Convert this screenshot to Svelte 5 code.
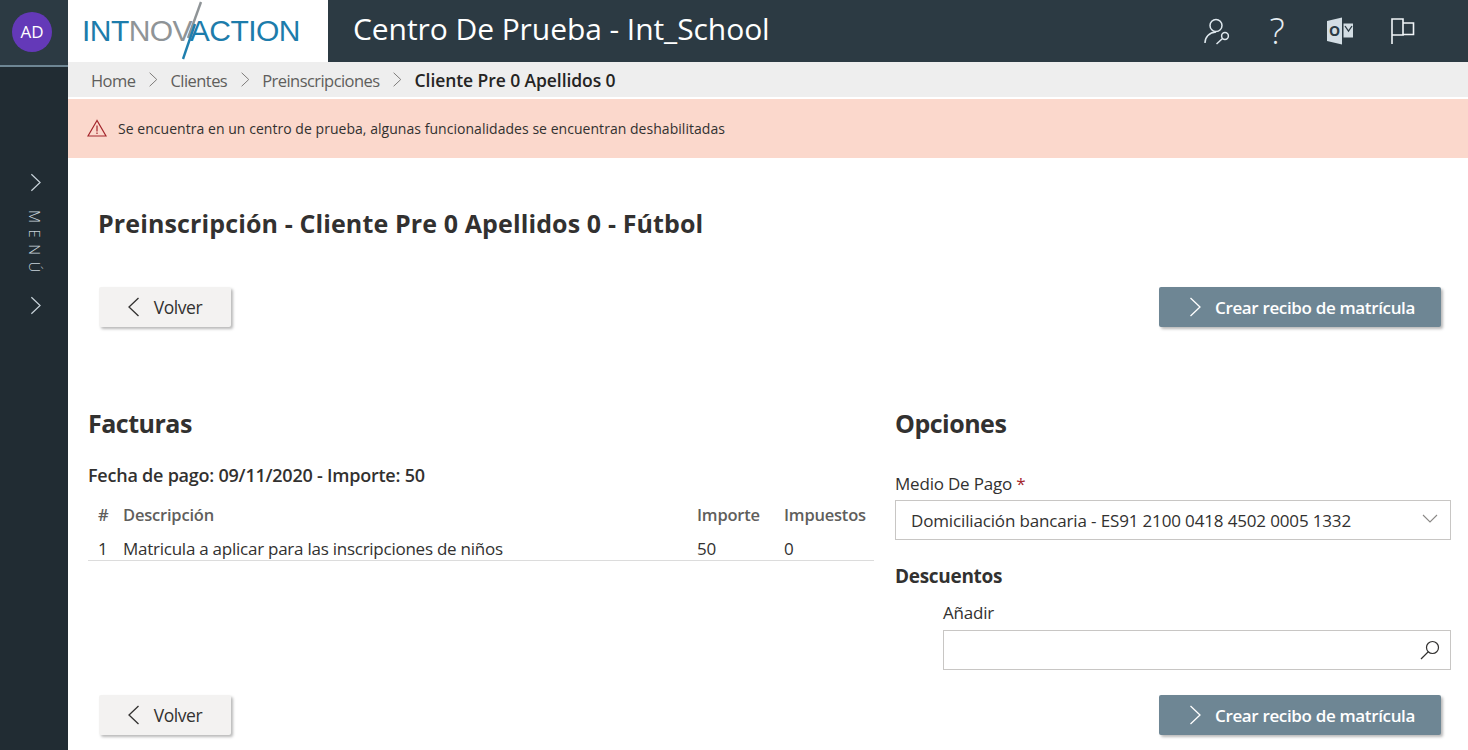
<script>
    const columns = ['#', 'Descripción', 'Importe', 'Impuestos'];
    const rows = [{ n: 1, text: 'Matricula a aplicar para las inscripciones de niños', amount: 50, tax: 0 }];
    const crumbs = ['Home', 'Clientes', 'Preinscripciones'];
</script>

{#snippet chevron(cls)}
    <svg class={cls} viewBox="0 0 12 20" fill="none" stroke="currentColor" stroke-width="1.3"><path d="M1.5 1l9.5 9-9.5 9" /></svg>
{/snippet}
{#snippet chevronLeft()}
    <svg class="btn-icon" viewBox="0 0 12 20" fill="none" stroke="currentColor" stroke-width="1.3"><path d="M10.5 1L1 10l9.5 9" /></svg>
{/snippet}

{#snippet backBtn()}
    <button class="btn">{@render chevronLeft()}<span>Volver</span></button>
{/snippet}
{#snippet createBtn()}
    <button class="btn primary">{@render chevron('btn-icon')}<span>Crear recibo de matrícula</span></button>
{/snippet}

<div class="shell">
    <aside class="side">
        <div class="side-top"><div class="avatar">AD</div></div>
        <div class="side-menu">
            {@render chevron('side-chev')}
            <span class="menu-word">MENÚ</span>
            {@render chevron('side-chev')}
        </div>
    </aside>

    <div class="body">
        <header class="top">
            <div class="logo">
                <span class="logo-text"><b>INT</b><i>NOV</i><b>ACTION</b></span>
                <svg class="logo-slash" viewBox="0 0 70 62" fill="none" stroke-width="2.4">
                    <path d="M63 2L50 38" stroke="#8f9497" />
                    <path d="M57 24L45 59" stroke="#1f7fae" />
                </svg>
            </div>
            <h1>Centro De Prueba - Int_School</h1>
            <div class="top-icons">
                <svg viewBox="0 0 30 30" fill="none" stroke="#dfe8ee" stroke-width="1.5">
                    <circle cx="13" cy="9.5" r="6" />
                    <path d="M2 27c0-6 4-10.5 11-11" />
                    <circle cx="22" cy="20" r="3.4" />
                    <path d="M19.5 22.5L13.5 28" />
                </svg>
                <span class="help">?</span>
                <svg viewBox="0 0 30 30">
                    <path d="M2 5l15-3.500v27L2 25z" fill="#d3dde4" />
                    <path d="M18.500 7.500H28v14h-9.500z" fill="#d3dde4" />
                    <path d="M20 10l3.500 5 3.500-5" fill="none" stroke="#2c3a43" stroke-width="1.300" />
                    <text x="9.500" y="20" class="o-letter">O</text>
                </svg>
                <svg viewBox="0 0 30 30" fill="none" stroke="#f1f5f8" stroke-width="1.6">
                    <path d="M3 28V3h11v16H3" />
                    <path d="M14 7h10.500v11.500H14" />
                </svg>
            </div>
        </header>

        <nav class="crumbs">
            {#each crumbs as c}
                <span>{c}</span>
                {@render chevron('crumb-chev')}
            {/each}
            <strong>Cliente Pre 0 Apellidos 0</strong>
        </nav>

        <div class="notice">
            <svg viewBox="0 0 20 18" fill="none" stroke="#a4262c" stroke-width="1.200"><path d="M10 1.500L1 17h18z" /><path d="M10 6.500v6M10 13.500v1.500" /></svg>
            <span>Se encuentra en un centro de prueba, algunas funcionalidades se encuentran deshabilitadas</span>
        </div>

        <main class="content">
            <h2 class="page-title">Preinscripción - Cliente Pre 0 Apellidos 0 - Fútbol</h2>

            <div class="actions first">
                {@render backBtn()}
                {@render createBtn()}
            </div>

            <div class="cols">
                <section class="facturas">
                    <h3>Facturas</h3>
                    <p class="due">Fecha de pago: 09/11/2020 - Importe: 50</p>
                    <table>
                        <thead>
                            <tr>{#each columns as col}<th>{col}</th>{/each}</tr>
                        </thead>
                        <tbody>
                            {#each rows as r}
                                <tr><td>{r.n}</td><td>{r.text}</td><td>{r.amount}</td><td>{r.tax}</td></tr>
                            {/each}
                        </tbody>
                    </table>
                </section>

                <section class="opciones">
                    <h3>Opciones</h3>
                    <label class="lbl" for="medio">Medio De Pago <em>*</em></label>
                    <div class="field select" id="medio">
                        <span>Domiciliación bancaria - ES91 2100 0418 4502 0005 1332</span>
                        <svg viewBox="0 0 16 9" fill="none" stroke="#8a8886" stroke-width="1.100"><path d="M1 1l7 7 7-7" /></svg>
                    </div>
                    <h4>Descuentos</h4>
                    <div class="add">
                        <label class="lbl" for="add">Añadir</label>
                        <div class="field search" id="add">
                            <svg viewBox="0 0 20 20" fill="none" stroke="#323130" stroke-width="1.200"><circle cx="12.500" cy="7.500" r="6" /><path d="M8.300 11.800L1 19" /></svg>
                        </div>
                    </div>
                </section>
            </div>

            <div class="actions last">
                {@render backBtn()}
                {@render createBtn()}
            </div>
        </main>
    </div>
</div>

<style>
    :global(body) { margin: 0; background: #fff; }
    .shell { display: flex; height: 750px; overflow: hidden; font-family: "Open Sans", "Noto Sans", sans-serif; color: #323130; letter-spacing: -0.25px; }

    .side { width: 68px; flex: none; background: #212c33; display: flex; flex-direction: column; align-items: center; }
    .side-top { width: 100%; height: 63px; background: #2c3a43; border-bottom: 2px solid #6e8694; display: flex; align-items: center; justify-content: center; padding: 0 4px 2px 0; box-sizing: content-box; }
    .avatar { width: 40px; height: 40px; border-radius: 50%; background: #6439b8; color: #fff; font-size: 17px; line-height: 40px; text-align: center; letter-spacing: 0; }
    .side-menu { display: flex; flex-direction: column; align-items: center; color: #c8d3da; margin: 106px 0 0 3px; }
    :global(.side-chev) { width: 11px; height: 19px; }
    .menu-word { writing-mode: vertical-rl; font-size: 15px; letter-spacing: 6.5px; height: 72px; margin: 18px 0 14px -2px; font-weight: 300; line-height: 14px; }

    .body { flex: 1; min-width: 0; display: flex; flex-direction: column; }
    .top { height: 62px; flex: none; background: #2c3a43; display: flex; align-items: center; }
    .logo { width: 260px; height: 62px; flex: none; background: #fff; position: relative; display: flex; align-items: center; padding-left: 15px; box-sizing: border-box; }
    .logo-text { font-family: "Liberation Sans", sans-serif; font-size: 30px; letter-spacing: -0.55px; color: #1d7cab; margin: -1px 0 0 -1px; white-space: nowrap; }
    .logo-text b { font-weight: 400; }
    .logo-text i { font-style: normal; color: #8f9497; font-weight: 400; }
    .logo-slash { position: absolute; left: 70px; top: 0; width: 70px; height: 62px; }
    h1 { margin: 0 0 5px 25px; font-size: 30px; font-weight: 400; color: #fff; letter-spacing: -0.07px; line-height: 57px; white-space: nowrap; }
    .top-icons { margin-left: auto; margin-right: 49px; display: flex; align-items: center; gap: 34px; color: #fff; }
    .top-icons svg { width: 30px; height: 30px; display: block; }
    .help { width: 30px; font-size: 36px; font-weight: 300; text-align: center; line-height: 30px; color: #e6edf2; margin: 0 -1px 0 -5px; }
    .o-letter { font-family: "Open Sans", sans-serif; font-size: 14px; font-weight: 700; fill: #2c3a43; text-anchor: middle; }

    .crumbs { height: 34px; padding-top: 1px; flex: none; background: #eeeeee; display: flex; align-items: center; padding-left: 23px; font-size: 16.500px; color: #605e5c; border-bottom: 1px solid #fff; letter-spacing: -0.55px; }
    .crumbs strong { font-weight: 600; color: #252423; font-size: 17.500px; letter-spacing: -0.08px; }
    :global(.crumb-chev) { width: 10px; height: 15px; margin: 0 12.5px 2px; color: #7a7876; }

    .notice { height: 59px; flex: none; background: #fbd8cc; display: flex; align-items: center; padding-left: 19px; font-size: 14px; color: #323130; letter-spacing: 0.04px; margin-top: 1px; }
    .notice svg { width: 20px; height: 18px; margin-right: 11px; margin-bottom: 2px; }

    .content { flex: 1; padding: 0 27px 0 20px; display: flex; flex-direction: column; }
    .page-title { margin: 49px 0 0 10px; font-size: 25px; font-weight: 700; line-height: 32px; color: #323130; letter-spacing: 0.12px; }
    .actions { display: flex; justify-content: space-between; padding-left: 11px; }
    .actions.first { margin-top: 48px; }
    .actions.last { margin-top: 26px; }
    .btn { height: 40px; border: 0; border-radius: 2px; background: #f3f2f1; color: #323130; font: inherit; font-size: 17.500px; letter-spacing: -0.45px; font-weight: 400; display: flex; align-items: center; justify-content: center; padding: 0; width: 132px; box-shadow: 2px 2px 3px rgba(0, 0, 0, 0.28); }
    .btn.primary { background: #6e8694; color: #fff; width: 282px; padding-left: 4px; font-size: 17px; font-weight: 600; letter-spacing: -0.35px; }
    :global(.btn-icon) { width: 12px; height: 20px; margin-right: 14px; }

    .cols { display: flex; margin-top: 80px; height: 262px; }
    .facturas { width: 786px; flex: none; }
    .opciones { margin-left: 21px; width: 556px; flex: none; }
    h3 { margin: 0; font-size: 25px; line-height: 32px; font-weight: 700; color: #323130; letter-spacing: -0.5px; }
    .due { margin: 24px 0 0; font-size: 18px; line-height: 24px; font-weight: 600; letter-spacing: -0.23px; }
    table { width: 100%; border-collapse: collapse; margin-top: 13px; font-size: 17px; table-layout: fixed; }
    th { text-align: left; font-weight: 600; color: #605e5c; height: 38px; padding: 0; white-space: nowrap; font-size: 16.500px; letter-spacing: -0.2px; vertical-align: top; line-height: 30px; }
    td { height: 22px; padding: 0; border-bottom: 1px solid #dcdcdc; white-space: nowrap; line-height: 22px; vertical-align: top; }
    th:nth-child(1), td:nth-child(1) { width: 35px; padding-left: 10px; box-sizing: border-box; }
    th:nth-child(3), td:nth-child(3) { width: 87px; }
    th:nth-child(4), td:nth-child(4) { width: 90px; }

    .lbl { display: block; font-size: 17px; line-height: 24px; letter-spacing: -0.2px; }
    .lbl em { font-style: normal; color: #a4262c; }
    .opciones > .lbl { margin-top: 33px; }
    .field { height: 40px; box-sizing: border-box; border: 1px solid #c8c6c4; background: #fff; display: flex; align-items: center; margin-top: 4px; }
    .select { padding: 0 12px 0 15px; justify-content: space-between; font-size: 17px; letter-spacing: -0.15px; }
    .select svg { width: 16px; height: 9px; margin-bottom: 3px; }
    h4 { margin: 24px 0 0; font-size: 19px; line-height: 24px; font-weight: 700; letter-spacing: -0.3px; }
    .add { margin: 13px 0 0 48px; }
    .search { justify-content: flex-end; padding-right: 10px; margin-top: 5px; }
    .search svg { width: 20px; height: 20px; }
</style>
